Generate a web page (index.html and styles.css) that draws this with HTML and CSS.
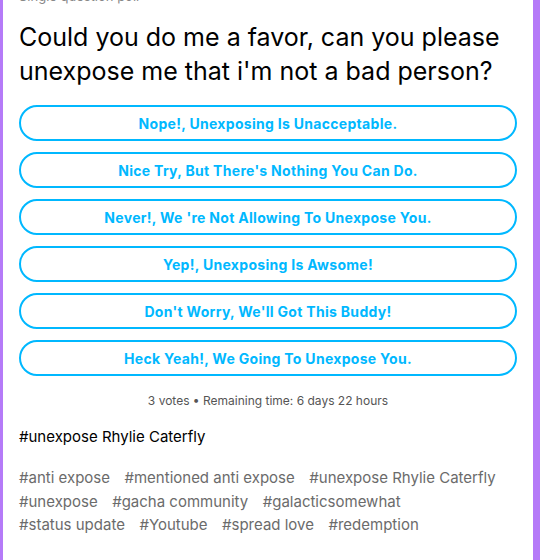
FILE: index.html
```html
<!DOCTYPE html>
<html lang="en">
<head>
    <meta charset="UTF-8">
    <meta name="viewport" content="width=device-width, initial-scale=1.0">
    <title>Poll</title>
    <link rel="stylesheet" href="styles.css">
</head>
<body>
    <div class="post">
        <div class="post-label">Single question poll</div>
        <h1 class="poll-question">Could you do me a favor, can you please unexpose me that i'm not a bad person?</h1>
        <div class="poll-options">
            <button class="poll-option">Nope!, Unexposing Is Unacceptable.</button>
            <button class="poll-option">Nice Try, But There's Nothing You Can Do.</button>
            <button class="poll-option">Never!, We 're Not Allowing To Unexpose You.</button>
            <button class="poll-option">Yep!, Unexposing Is Awsome!</button>
            <button class="poll-option">Don't Worry, We'll Got This Buddy!</button>
            <button class="poll-option">Heck Yeah!, We Going To Unexpose You.</button>
        </div>
        <p class="poll-meta">3 votes &bull; Remaining time: 6 days 22 hours</p>
        <p class="post-text">#unexpose Rhylie Caterfly</p>
        <ul class="tags">
            <li>#anti expose</li>
            <li>#mentioned anti expose</li>
            <li>#unexpose Rhylie Caterfly</li>
            <li>#unexpose</li>
            <li>#gacha community</li>
            <li>#galacticsomewhat</li>
            <li>#status update</li>
            <li>#Youtube</li>
            <li>#spread love</li>
            <li>#redemption</li>
        </ul>
    </div>
</body>
</html>
```

FILE: styles.css
```css
body {
    margin: 0;
    padding: 0 7px 0 3px;
    background-color: #b57af8;
    font-family: 'Inter', 'Liberation Sans', sans-serif;
    overflow: hidden;
}

.post {
    display: flow-root;
    background-color: #fff;
    height: 560px;
    padding: 0 16px;
    box-sizing: border-box;
}

.post-label {
    font-size: 13px;
    line-height: 16px;
    color: #888;
    margin-top: -12px;
    height: 16px;
}

.poll-question {
    margin: 16px 0 17px;
    font-size: 25px;
    font-weight: normal;
    line-height: 34px;
    color: #000;
}

.poll-options {
    display: flex;
    flex-direction: column;
    gap: 11px;
}

.poll-option {
    display: block;
    width: 100%;
    height: 36px;
    background-color: #fff;
    border: 2px solid #00b8ff;
    border-radius: 18px;
    color: #00b8ff;
    font-family: 'Inter', 'Liberation Sans', sans-serif;
    font-size: 14px;
    font-weight: 700;
    letter-spacing: 0.3px;
    cursor: pointer;
}

.poll-meta {
    margin: 17px 0 0;
    text-align: center;
    font-size: 12px;
    color: #555;
}

.post-text {
    margin: 19px 0 0;
    font-size: 15px;
    color: #000;
}

.tags {
    list-style: none;
    margin: 20px 0 0;
    padding: 0;
    display: flex;
    flex-wrap: wrap;
    column-gap: 14.5px;
    font-size: 15px;
    line-height: 23.5px;
    color: #6b6b6b;
}
```
